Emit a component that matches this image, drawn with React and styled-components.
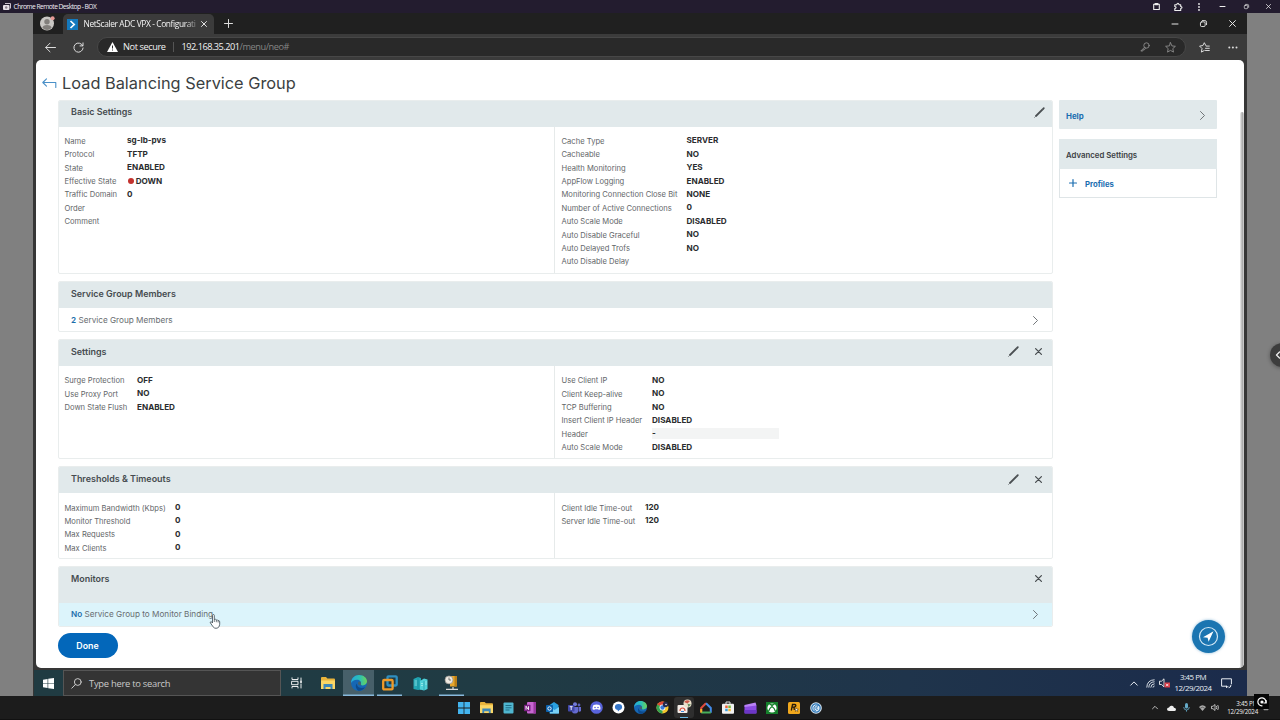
import React from "react";
import styled, { createGlobalStyle, css } from "styled-components";

const Global = createGlobalStyle`
  * { box-sizing: border-box; }
  html, body { margin: 0; padding: 0; overflow: hidden; }
  body { width: 1280px; height: 720px; background: #808080; font-family: Inter, "Liberation Sans", sans-serif; }
  svg { display: block; flex: none; overflow: visible; }
  button { font: inherit; border: 0; padding: 0; background: none; color: inherit; }
`;

const ui = `"Open Sans", "Noto Sans", sans-serif`;

const Screen = styled.div`
  width: 1280px; height: 720px; display: flex; flex-direction: column; position: relative; overflow: hidden;
  white-space: nowrap;
`;

/* ---------- outer window ---------- */
const HostTitle = styled.header`
  height: 13px; flex: none; background: #231c2f; color: #f1eef5; display: flex; align-items: center;
  padding: 0 0 0 3px; font: 6.7px/13px ${ui};
`;
const HostName = styled.span`margin-left: 2.5px; flex: 1; letter-spacing: -0.55px;`;
const HostTools = styled.div`
  display: grid; grid-template-columns: 22px 21px 21px 27px 20px 24px; justify-items: center; align-items: center; color: #eee;
`;
const HostBody = styled.div`flex: 1; display: flex; padding: 0 33px 0 33px; background: #808080;`;
const Remote = styled.div`width: 1214px; flex: none; height: 683px; display: flex; flex-direction: column; background: #363636;`;

/* ---------- browser ---------- */
const TabStrip = styled.div`height: 21px; flex: none; background: #202020; display: flex; align-items: stretch; color: #ddd;`;
const Profile = styled.div`width: 30px; padding: 3px 0 0 7px;`;
const Tab = styled.div`
  width: 151px; margin-top: 1px; height: 20px; background: #3b3b3b; border-radius: 5px 5px 0 0; display: flex; align-items: center;
  padding: 0 6.5px 0 4px; font: 8.4px/20px ${ui}; color: #f4f4f4;
`;
const TabTitle = styled.span`
  width: 117px; margin-left: 5.5px; flex: none; letter-spacing: -0.38px;
  mask-image: linear-gradient(90deg, #000 86%, transparent 100%);
`;
const NewTab = styled.div`margin: 6px 0 0 9.5px;`;
const WindowButtons = styled.div`
  margin-left: auto; display: grid; grid-template-columns: 29px 29px 29px; justify-items: center; align-items: center; color: #e6e6e6;
`;
const Toolbar = styled.div`
  height: 26px; flex: none; background: #3b3b3b; display: flex; align-items: center; padding-left: 12px; color: #ddd;
`;
const NavButton = styled.span`width: 28px; display: flex;`;
const Address = styled.div`
  width: 1089px; height: 20px; margin-left: -4px; border-radius: 10px; background: #292929; border: 1px solid #474747; flex: none;
  display: flex; align-items: center; padding: 0 9px 0 9px; font: 9.2px/18px ${ui}; color: #f2f2f2;
`;
const Secure = styled.span`margin-left: 5px; width: 50px; letter-spacing: -0.4px;`;
const Url = styled.span`border-left: 1px solid #555; line-height: 10px; padding-left: 7.5px; flex: 1; letter-spacing: -0.5px;`;
const UrlPath = styled.span`color: #858585; letter-spacing: -0.44px;`;
const AddressIcons = styled.span`display: flex; gap: 15px; color: #8c8c8c;`;
const BrowserIcons = styled.span`display: flex; align-items: center; gap: 18px; margin-left: 12.5px; color: #e0e0e0;`;

const Viewport = styled.main`
  width: 1208.5px; height: 608px; margin-left: 2.5px; flex: none; background: #fff; border-radius: 5px; position: relative; overflow: hidden;
  padding: 13px 0 0 6px;
`;
const ScrollTrack = styled.div`
  position: absolute; right: 0; top: 52px; bottom: 0; width: 4.5px; border-radius: 3px 3px 0 0;
  background: linear-gradient(90deg, #ececec, #a9a9a9 60%, #d6d6d6);
`;

/* ---------- page ---------- */
const Heading = styled.h1`
  margin: 0; height: 20px; display: flex; align-items: center; gap: 5.5px; font-size: 16.35px; line-height: 20px; font-weight: 400; color: #3b3f42;
`;
const Columns = styled.div`display: flex; gap: 6.5px; padding-left: 16px; margin-top: 6.5px;`;
const Panels = styled.div`width: 995px; display: flex; flex-direction: column; gap: 6.8px;`;
const Panel = styled.section`
  height: ${p => p.$h}px; border: 1px solid #e9eded; border-radius: 2px; overflow: hidden; display: flex; flex-direction: column;
`;
const PanelHead = styled.header`
  height: ${p => p.$h || 26}px; flex: none; background: #e1e9eb; display: flex; justify-content: space-between; padding: 0 6.5px 0 12.5px;
  font-size: 8.95px; line-height: ${p => p.$line || 23.5}px; font-weight: 600; color: #464c50;
`;
const PanelTools = styled.span`height: 24px; display: flex; align-items: center; gap: 11px; color: #4a4f52;`;
const PanelBody = styled.div`flex: 1; display: grid; grid-template-columns: 495px 1fr;`;
const Side = styled.dl`
  margin: 0; padding: 7.4px 0 0 6px; ${p => p.$right && css`border-left: 1px solid #e6eaea; padding-left: 7px;`}
`;
const Row = styled.div`display: grid; grid-template-columns: ${p => p.$w}px auto; height: 13.4px; align-items: center; justify-content: start;`;
const Label = styled.dt`font-size: 7.6px; line-height: 13px; color: #636669; padding-top: 1px;`;
const Value = styled.dd`
  margin: 0; font-size: 8.15px; line-height: 11px; font-weight: 700; color: #2a2c2e; display: flex; align-items: center;
  ${p => p.$field && css`width: 127px; background: #f3f4f4; margin-left: -0.5px; padding-left: 0.5px;`}
`;
const Dot = styled.i`width: 6.6px; height: 6.6px; flex: none; border-radius: 50%; background: #c3322e; margin: 0 1.4px 0 0.7px;`;
const LinkRow = styled.div`
  flex: 1; display: flex; align-items: center; justify-content: space-between; padding: 2px 13.5px 0 12.5px; font-size: 8.2px; color: #686d70;
  ${p => p.$hover && css`background: #dcf4fb; margin: 0 -1px -1px; padding: 0 14.5px 1px 13.5px;`}
`;
const Gray = styled.span`color: #63686b; display: flex;`;
const Count = styled.b`color: #1b6eab; font-weight: 600;`;
const Done = styled.button`
  width: 60px; height: 25px; border-radius: 13px; background: #0367ba; color: #fff; font-size: 8.8px; font-weight: 600; margin: 6.5px 0 0 16px;
`;
const Aside = styled.aside`width: 158px;`;
const Help = styled.div`
  height: 29px; background: #e1e9eb; display: flex; align-items: center; justify-content: space-between; padding: 3px 12px 0 7px;
  font-size: 7.9px; font-weight: 700; color: #1a6db0; margin-bottom: 10px; border-radius: 1px;
`;
const AsideHead = styled.div`height: 30px; background: #e1e9eb; padding: 1px 7px; font-size: 7.8px; line-height: 31px; font-weight: 600; color: #3b4043;`;
const AsideItem = styled.div`
  height: 29px; border: 1px solid #dfe5e7; border-top: 0; display: flex; align-items: center; gap: 8px; padding: 3px 0 0 9px;
  font-size: 7.7px; font-weight: 700; color: #1a6db0;
`;
const PlusMark = styled.span`display: flex; margin-top: -2px;`;
const Guide = styled.div`
  position: absolute; left: 1156px; top: 560px; width: 33px; height: 33px; border-radius: 50%; background: #1b75b1;
  box-shadow: 0 0 3px #1b75b188; display: grid; place-items: center;
`;
const Pointer = styled.div`position: absolute; left: 209px; top: 614px;`;
const SideHandle = styled.div`
  position: absolute; left: 1270px; top: 343px; width: 24px; height: 24px; border-radius: 50%; background: #3d3d3d; padding: 8px 0 0 5px;
  box-shadow: 0 1px 4px #0005; color: #eee;
`;

/* ---------- taskbars ---------- */
const TaskBar = styled.div`
  height: 26px; margin-top: 2px; margin-left: 1px; display: flex; color: #fff;
  background: linear-gradient(90deg, #203b42 0%, #203b44 40%, #1f344b 72%, #1b2b4b 100%);
`;
const Start = styled.div`width: 29px; display: grid; place-items: center;`;
const Search = styled.div`
  width: 218px; background: #343434; border: 1px solid #555; display: flex; align-items: center; gap: 7px; padding: 1px 0 0 7px;
  font: 9.4px/23px ${ui}; color: #c9c9c9; letter-spacing: -0.27px;
`;
const TaskCell = styled.div`
  width: 31px; display: grid; place-items: center; ${p => p.$active && css`background: #47606a;`}
  ${p => p.$open && css`box-shadow: inset 0 -1.4px #88b9dc;`}
  ${p => p.$open && !p.$active && css`margin: 0 3px; width: 25px;`}
`;
const Tray = styled.div`margin-left: auto; display: flex; align-items: center; gap: 8px; padding-right: 15px; color: #e8edf3;`;
const Speaker = styled.span`display: flex; margin-left: -4px; margin-right: -4px;`;
const Clock = styled.div`
  font: 7.9px/11.2px ${ui}; letter-spacing: -0.5px; width: 38px; display: flex; flex-direction: column; align-items: center; margin-right: 1px;
`;
const HostTaskBar = styled.footer`
  height: 24px; flex: none; background: #1c1c1c; border-bottom: 1px solid #111; display: flex; padding-left: 453px; color: #eee;
`;
const HostIcons = styled.div`display: grid; grid-template-columns: repeat(17, 22px);`;
const HostCell = styled.div`
  display: grid; place-items: center;
  ${p => p.$active && css`background: linear-gradient(#6ab7e2, #6ab7e2) center bottom / 8px 1.5px no-repeat #2e2e2e; border-radius: 3px; margin: 1px;`}
`;
const HostTray = styled.div`margin-left: auto; display: flex; align-items: center; padding-right: 11px;`;
const TrayItem = styled.span`display: flex; margin-left: ${p => p.$gap}px;`;
const HostClock = styled.div`
  margin-left: 7px; width: 32px; font: 6.2px/8px ${ui}; display: flex; flex-direction: column; align-items: flex-end; letter-spacing: -0.2px;
`;
const CastBadge = styled.div`
  position: absolute; left: 1254px; top: 694px; width: 15px; height: 15px; background: #050505; display: grid; place-items: center; color: #fff;
`;

/* ---------- line icons ---------- */
const Svg = ({ w = 12, h = w, box = `0 0 ${w} ${h}`, sw = 1, children }) => (
  <svg width={w} height={h} viewBox={box} fill="none" stroke="currentColor" strokeWidth={sw} strokeLinecap="round" strokeLinejoin="round">{children}</svg>
);
const Minus = ({ s = 6 }) => <Svg w={s}><path d={`M0 ${s / 2}H${s}`} /></Svg>;
const Cross = ({ s = 6, sw = 1 }) => <Svg w={s} box="0 0 6 6" sw={sw}><path d="M.5 .5L5.5 5.5M5.5 .5L.5 5.5" /></Svg>;
const Restore = ({ s = 6 }) => <Svg w={s} box="0 0 6 6" sw={.8}><rect x=".4" y="1.6" width="4" height="4" rx="1" /><path d="M2 .5h2.200Q5.600.5 5.600 2v2" /></Svg>;
const Pencil = () => <Svg w={11}><path d="M1.600 9.400 8.600 2.400" strokeWidth="2" strokeLinecap="butt" /><path d="m9 2 .8-.8" strokeWidth="1.800" /><path d="m.7 10.300.8-.8" strokeWidth=".8" /></Svg>;
const Chevron = () => <Gray><Svg w={5} h={9} sw={.9}><path d="m.5.500 4 4-4 4" /></Svg></Gray>;
const Up = ({ w = 8 }) => <Svg w={w} h={5} box="0 0 8 5"><path d="M.7 4.200 4 .900l3.300 3.300" /></Svg>;

const Avatar = () => (
  <svg width="16" height="16"><circle cx="7" cy="7.500" r="7" fill="#c9c7c4" /><circle cx="7" cy="5.800" r="2.700" fill="#827f7c" /><path d="M2.400 11.800Q2.700 8.900 7 8.900t4.600 2.900Q9.800 14 7 14T2.400 11.800" fill="#827f7c" /><circle cx="12.600" cy="2.200" r="2" fill="#e79a96" /></svg>
);
const Favicon = () => <svg width="11" height="11"><rect width="11" height="11" fill="#1479bd" /><path d="m3.500 2 3.700 3.500L3.500 9" fill="none" stroke="#fff" strokeWidth="1.700" /></svg>;
const WindowsLogo = ({ s = 11, c = "#fff", skew }) => (
  <svg width={s} height={s} viewBox="0 0 12 12" fill={c}>{skew
    ? <path d="M0 1.800 5 1v4.600H0zM5.700.9 12 0v5.600H5.700zM0 6.300h5v4.600l-5-.7zM5.700 6.300H12V12l-6.300-.9z" />
    : <path d="M0 0h5.600v5.600H0zM6.400 0H12v5.600H6.400zM0 6.400h5.600V12H0zM6.400 6.400H12V12H6.400z" />}</svg>
);
const Folder = ({ s = 14 }) => (
  <svg width={s} height={s} viewBox="0 0 14 14"><path d="M0 2q0-1 1-1h4l1.400 1.500H13q1 0 1 1V12H0z" fill="#e9b43c" /><path d="M0 4.500h14V13H0z" fill="#fbd766" /><path d="M2.500 8h9v5h-2v-2h-5v2h-2z" fill="#3d88b9" /></svg>
);
const Edge = ({ s = 16 }) => (
  <svg width={s} height={s} viewBox="0 0 16 16">
    <defs><linearGradient id="eg" x1="0" x2="1"><stop stopColor="#25a8db" /><stop offset=".55" stopColor="#2cc1b3" /><stop offset="1" stopColor="#6dd457" /></linearGradient></defs>
    <circle cx="8" cy="8" r="8" fill="#1667b4" /><path d="M0 8C.2 3 3.800 0 8 0c4.600 0 8 3 8 6.300 0 2.500-2 4.100-4.200 4.100-2 0-2.700-.9-2-1.900C10.500 6.500 8.500 4.600 6 4.700 3 4.800 1 6 0 8" fill="url(#eg)" />
    <path d="M6.100 8.500c-.5 3.200 2.500 5.600 8 3.800-1.500 2.300-4 3.700-6.600 3.500C4.500 13.500 4 10 6.100 8.500" fill="#0d4a8d" /><path d="M8 6.600Q9.900 6.600 9.900 8q-.7 1.600.5 2.200Q7.700 10.500 7 9 6.700 7.500 8 6.600" fill="#47606a" />
  </svg>
);
const VmWare = () => <svg width="16" height="16" fill="none" strokeWidth="2.300"><rect x="5.500" y="1.300" width="9.200" height="9.200" rx="1" stroke="#2f8fc0" /><rect x="1.200" y="5" width="9.400" height="9.400" rx="1" stroke="#f09a28" /></svg>;
const Servers = () => (
  <svg width="15" height="15"><path d="M.5 3 5 1l3 1v11.500l-3 .5-4.500-1z" fill="#23a8b5" /><path d="m7 5 4-2.500 3.500 1V13L11 14.500l-4-1z" fill="#50d0d8" /><path d="M5 1v12.500M11 5v9.500" stroke="#157e8d" strokeWidth=".5" /><path d="M1.500 5H4M1.500 7H4M1.500 9H4M8 7.500h2M8 9.500h2M12 6h2M12 8h2" stroke="#aff0ef" strokeWidth=".7" /></svg>
);
const Clocked = () => (
  <svg width="16" height="16"><path d="M6 1h6.500v10.500H6z" fill="#e8a72d" /><path d="M10.500 1H13v10.500h-2.500z" fill="#b97e18" /><path d="M9 12v2M2 14.300h12" stroke="#d8d8d8" strokeWidth="1.300" /><circle cx="5" cy="4.900" r="4" fill="#eeeae2" stroke="#8f8c86" strokeWidth=".7" /><path d="M5 2.500v2.500h2" fill="none" stroke="#555" strokeWidth=".8" /></svg>
);
const TaskView = () => <Svg w={12} sw={.9}><path d="M1 .8v1.700h6V.8M1 11V9.500h6V11M1 4.300h6v3.400H1zM10 1v2M10 7v4" /><path d="M10 4v1.500" strokeWidth="1.600" /></Svg>;
const Cursor = () => (
  <svg width="12" height="15" viewBox="0 0 11 15"><path d="M3 8V1.500Q3 .5 3.900.5t.9 1v4q1.500-.6 2 .4 1.500-.3 1.800.7 1.600-.1 1.600 1.200v2.500q0 3-2.600 3.900H5Q3.200 12.500.8 8.800q-.2-1.100.8-1.100Q2.400 7.900 3 9z" fill="#fff" stroke="#3b4850" strokeWidth=".8" /><path d="M4.800 5.500V8M6.800 6v2.200M8.600 6.700v1.800" stroke="#3b4850" strokeWidth=".7" /></svg>
);

const hostIcons = [
  <WindowsLogo s={12} c="#43b4ee" />,
  <Folder s={13} />,
  <svg width="11" height="12"><rect x=".5" y=".5" width="10" height="11" rx="1" fill="#4fb6cf" /><path d="M2.500 3.500h6M2.500 5.800h6M2.500 8h4" stroke="#19657f" strokeWidth=".9" /></svg>,
  <svg width="12" height="12"><rect x="3" y="0" width="9" height="11.500" rx="1" fill="#c767d0" /><path d="M9.500 0h2.500v11.500H9.500z" fill="#98379f" /><rect y="2.700" width="6.500" height="6.500" rx=".7" fill="#7a2182" /><path d="M2 7.700V4.200l2.500 3.500V4.200" stroke="#fff" strokeWidth=".9" fill="none" /></svg>,
  <svg width="13" height="12"><path d="M3.500 3 8 0l4.500 3v8.500h-9z" fill="#2aa0df" /><path d="m4 5 4.500 3L13 5v6.500H4z" fill="#79d0f5" /><rect y="3" width="7" height="7" rx=".8" fill="#0b62ad" /><circle cx="3.500" cy="6.500" r="1.700" fill="none" stroke="#fff" strokeWidth=".9" /></svg>,
  <svg width="13" height="12"><circle cx="7" cy="2.200" r="2" fill="#7279d8" /><circle cx="11" cy="3" r="1.400" fill="#5960bd" /><path d="M4 5h6v5q-1 1.500-3 1.500T4 10zM10.500 5H13v4q-1 1-2.500.5z" fill="#656bd0" /><rect y="3" width="6.500" height="6.500" rx=".7" fill="#4248a8" /><path d="M1.700 4.700h3M3.200 4.700V8" stroke="#fff" strokeWidth=".9" /></svg>,
  <svg width="13" height="13"><circle cx="6.500" cy="6.500" r="6.300" fill="#5964dc" /><path d="M3.500 4Q6.500 2.800 9.500 4q1.200 2 1 4.300l-1.700.8-.6-.9H4.800l-.6.9-1.700-.8Q2.300 6 3.500 4" fill="#fff" /><circle cx="5" cy="6.500" r=".8" fill="#5964dc" /><circle cx="8" cy="6.500" r=".8" fill="#5964dc" /></svg>,
  <svg width="13" height="13"><circle cx="6.500" cy="6.500" r="6" fill="#fff" /><ellipse cx="6.500" cy="6" rx="3.600" ry="2.900" fill="#3475c8" /><path d="m5.500 8 .5 2.500L8.500 8" fill="#3475c8" /></svg>,
  <Edge s={13} />,
  <svg width="13" height="13" viewBox="-6.500 -6.500 13 13"><circle r="6" fill="#f4c62e" /><path d="M0 0-5.200-3A6 6 0 0 1 5.200-3z" fill="#dd4739" /><path d="m0 0-5.200-3A6 6 0 0 0 0 6z" fill="#35a352" /><circle r="2.900" fill="#fff" /><circle r="2.200" fill="#397bdc" /><circle cx="3" cy="-3" r="2.700" fill="#23294e" /><circle cx="3.500" cy="-3" r=".8" fill="#e7edf5" /></svg>,
  <svg width="16" height="17"><rect x="1.500" y="6" width="10" height="8" rx="1" fill="#f3ece6" /><path d="M4 12q0-3 2.500-3T9 12" fill="none" stroke="#d94839" strokeWidth="1.100" /><path d="M5 12.500h3" stroke="#4087d6" /><circle cx="11.500" cy="4.500" r="4" fill="#eadfca" /><path d="M8 3Q10 0 14 2L11.500 4.500" fill="#cb5b4c" /><path d="M11.500 4.800 15 5.500 12.500 8" fill="#618f61" /></svg>,
  <svg width="12" height="12" fill="none" strokeWidth="2"><path d="M6 1.200 1.200 6v4.800" stroke="#de4b3e" /><path d="M6 1.200 10.800 6v4.800" stroke="#438be9" /><path d="M1.200 10.500h9.600" stroke="#47af5a" /><path d="M1.200 7v3.500" stroke="#efb52e" /></svg>,
  <svg width="12" height="13"><path d="M4 3V1h4v2" fill="none" stroke="#ddd" /><rect y="2.700" width="12" height="10" rx="1" fill="#f1f1f1" /><path d="M3.200 4.500h2.500V7H3.200z" fill="#ed6236" /><path d="M6.300 4.500h2.500V7H6.300z" fill="#75b83e" /><path d="M3.200 7.700h2.500v2.500H3.200z" fill="#3a9ddb" /><path d="M6.300 7.700h2.500v2.500H6.300z" fill="#f2b92f" /></svg>,
  <svg width="13" height="12"><rect x=".5" y="3" width="12" height="8.500" rx="1" fill="#8b4be1" /><path d="m.5 3 11-2.500 1 3-12 1.500z" fill="#b982f5" /><path d="M.5 8h12v3.500H.5z" fill="#6b36c7" /></svg>,
  <svg width="12" height="12"><rect width="12" height="12" fill="#15802b" /><circle cx="6" cy="6" r="4.600" fill="#fff" /><path d="M2.500 9.500Q3.500 6 6 4.500 8.500 6 9.500 9.500M3.500 2.300Q5 2.300 6 3.500 7 2.300 8.500 2.300" fill="none" stroke="#15802b" strokeWidth="1.300" /></svg>,
  <svg width="12" height="12"><rect width="12" height="12" rx="1.500" fill="#f1a81d" /><path d="M3.300 8.500 4.500 2.500H6.700Q8.300 2.700 7.700 4.200 7 5.400 5.500 5.200H4.200M6 5.300 6.300 8" fill="none" stroke="#25190b" strokeWidth="1.300" /><path d="m8.500 5.800.5 1.400h1.500L9.300 8l.5 1.500-1.300-.9-1.200.9.400-1.500-1-.8H8z" fill="#fff" stroke="#25190b" strokeWidth=".4" /></svg>,
  <svg width="12" height="12"><circle cx="6" cy="6" r="5.800" fill="#dceaf5" /><circle cx="6" cy="6" r="4.200" fill="none" stroke="#3078b7" strokeWidth="1.200" /><path d="M9.500 3.500Q6 2 4 5q-1 3.500 2 4M8 4.800Q6 4.500 5.800 6q.2 1.700 2 1.300" fill="none" stroke="#3078b7" strokeWidth="1" /></svg>,
];

/* ---------- data ---------- */
const basicLeft = [["Name", "sg-lb-pvs"], ["Protocol", "TFTP"], ["State", "ENABLED"], ["Effective State", "DOWN", "dot"], ["Traffic Domain", "0"], ["Order"], ["Comment"]];
const basicRight = [["Cache Type", "SERVER"], ["Cacheable", "NO"], ["Health Monitoring", "YES"], ["AppFlow Logging", "ENABLED"], ["Monitoring Connection Close Bit", "NONE"], ["Number of Active Connections", "0"], ["Auto Scale Mode", "DISABLED"], ["Auto Disable Graceful", "NO"], ["Auto Delayed Trofs", "NO"], ["Auto Disable Delay"]];
const setLeft = [["Surge Protection", "OFF"], ["Use Proxy Port", "NO"], ["Down State Flush", "ENABLED"]];
const setRight = [["Use Client IP", "NO"], ["Client Keep-alive", "NO"], ["TCP Buffering", "NO"], ["Insert Client IP Header", "DISABLED"], ["Header", "-", "field"], ["Auto Scale Mode", "DISABLED"]];
const thrLeft = [["Maximum Bandwidth (Kbps)", "0"], ["Monitor Threshold", "0"], ["Max Requests", "0"], ["Max Clients", "0"]];
const thrRight = [["Client Idle Time-out", "120"], ["Server Idle Time-out", "120"]];

const Fields = ({ rows, w, right }) => (
  <Side $right={right}>
    {rows.map(([label, value, kind]) => (
      <Row key={label} $w={w}>
        <Label>{label}</Label>
        {value && <Value $field={kind === "field"}>{kind === "dot" && <Dot />}{value}</Value>}
      </Row>
    ))}
  </Side>
);
const XMark = styled.span`margin-right: 3.5px; padding-left: 5px;`;
const Head = ({ title, edit, close, h, line }) => (
  <PanelHead $h={h} $line={line}>{title}<PanelTools>{edit && <Pencil />}{close && <XMark><Cross s={7} sw={1.1} /></XMark>}</PanelTools></PanelHead>
);

export default function App() {
  return (
    <Screen>
      <Global />
      <HostTitle>
        <svg width="8" height="8"><rect y="2" width="6.500" height="5" rx="1" fill="#e7e0e8" /><path d="M2 .5h5.500v5" fill="none" stroke="#c9c0cc" /><circle cx="3.200" cy="4.500" r="1.200" fill="#887d8b" /></svg>
        <HostName>Chrome Remote Desktop - BOX</HostName>
        <HostTools>
          <Svg w={7} sw={1.100}><path d="M.7 1.200h5.600v5.300H.7z" /><path d="M2.500 1.200h2" strokeWidth="2.200" /></Svg>
          <Svg w={8} sw={1.100}><path d="M.8 1.800h2Q3 .3 3.900.3T5 1.800h1.700v1.700q1.300.1 1.300 1t-1.300 1v2H.8V5.600q1.300-.2 1.300-1.100T.8 3.500z" /></Svg>
          <svg width="2" height="8" fill="#eee"><circle cx="1" cy="1" r=".9" /><circle cx="1" cy="4" r=".9" /><circle cx="1" cy="7" r=".9" /></svg>
          <Minus s={5} /><Restore s={5} /><Cross s={5} sw={.9} />
        </HostTools>
      </HostTitle>

      <HostBody>
        <Remote>
          <TabStrip>
            <Profile><Avatar /></Profile>
            <Tab><Favicon /><TabTitle>NetScaler ADC VPX - Configurati</TabTitle><Cross s={6} sw={.9} /></Tab>
            <NewTab><Svg w={9}><path d="M4.500.5v8M.5 4.500h8" /></Svg></NewTab>
            <WindowButtons><Minus s={6} /><Restore s={7} /><Cross s={7} sw={.85} /></WindowButtons>
          </TabStrip>
          <Toolbar>
            <NavButton><Svg w={11}><path d="M10.500 5.500H.8M5 1.200.7 5.500 5 9.800" /></Svg></NavButton>
            <NavButton><Svg w={11}><path d="M9.700 3.700A4.600 4.600 0 1 0 10.100 6M10 .9v3H7" /></Svg></NavButton>
            <Address>
              <svg width="11" height="10"><path d="M5.500 0 11 10H0z" fill="#fff" /><path d="M5.500 3.500v3M5.500 7.500v1" stroke="#292929" /></svg>
              <Secure>Not secure</Secure>
              <Url>192.168.35.201<UrlPath>/menu/neo#</UrlPath></Url>
              <AddressIcons>
                <Svg w={10} sw={.9}><circle cx="6.500" cy="3.500" r="2.700" /><path d="M4.500 5.300.8 9h2l.4-1.300h1.300L5.500 6" /></Svg>
                <Svg w={11} sw={.9}><path d="m5.500.7 1.400 3.200 3.500.4-2.600 2.300.7 3.500-3-1.700-3 1.700.7-3.500L.6 4.300l3.500-.4z" /></Svg>
              </AddressIcons>
            </Address>
            <BrowserIcons>
              <Svg w={11} sw={.95}><path d="M6.800 3.500 5.300.7 3.900 3.500l-3.300.6L3 6.500l-.6 3.600 2.900-1.600M7.300 4.100h3M6.500 6.300h3.800M6.500 8.500h3.800" /></Svg>
              <svg width="10" height="3" fill="#ddd"><circle cx="1.300" cy="1.500" r="1" /><circle cx="4.900" cy="1.500" r="1" /><circle cx="8.500" cy="1.500" r="1" /></svg>
            </BrowserIcons>
          </Toolbar>

          <Viewport>
            <Heading>
              <Svg w={15} h={13}><path d="M4.500 1.800.8 5.500l3.700 3.700M.8 5.500h13v5" stroke="#4a90c8" strokeWidth="1.100" /></Svg>
              Load Balancing Service Group
            </Heading>
            <Columns>
              <Panels>
                <Panel $h={174.500}><Head title="Basic Settings" edit line={22.500} />
                  <PanelBody><Fields rows={basicLeft} w={62.5} /><Fields rows={basicRight} w={125} right /></PanelBody></Panel>
                <Panel $h={51.300}><Head title="Service Group Members" />
                  <LinkRow><span><Count>2</Count> Service Group Members</span><Chevron /></LinkRow></Panel>
                <Panel $h={120.500}><Head title="Settings" edit close />
                  <PanelBody><Fields rows={setLeft} w={72.5} /><Fields rows={setRight} w={90.5} right /></PanelBody></Panel>
                <Panel $h={93}><Head title="Thresholds &amp; Timeouts" edit close />
                  <PanelBody><Fields rows={thrLeft} w={110.500} /><Fields rows={thrRight} w={83.500} right /></PanelBody></Panel>
                <Panel $h={61}><Head title="Monitors" close h={36} />
                  <LinkRow $hover><span><Count>No</Count> Service Group to Monitor Binding</span><Chevron /></LinkRow></Panel>
              </Panels>
              <Aside>
                <Help>Help<Chevron /></Help>
                <AsideHead>Advanced Settings</AsideHead>
                <AsideItem><PlusMark><Svg w={8} sw={1.200}><path d="M4 .5v7M.5 4h7" /></Svg></PlusMark>Profiles</AsideItem>
              </Aside>
            </Columns>
            <Done>Done</Done>
            <ScrollTrack />
            <Guide>
              <svg width="21" height="21"><circle cx="10.500" cy="10.500" r="9" fill="none" stroke="#d3e8f5" strokeWidth="1.200" /><path d="M15.500 5.200 10.600 15.800 9.600 11.700 5 11.300z" fill="#fff" /></svg>
            </Guide>
          </Viewport>

          <TaskBar>
            <Start><WindowsLogo s={11} skew /></Start>
            <Search><Svg w={11} sw={1}><circle cx="6.800" cy="4" r="3.400" /><path d="M4.400 6.500.8 10.200" /></Svg>Type here to search</Search>
            <TaskCell><TaskView /></TaskCell>
            <TaskCell><Folder s={14} /></TaskCell>
            <TaskCell $open $active><Edge /></TaskCell>
            <TaskCell $open><VmWare /></TaskCell>
            <TaskCell><Servers /></TaskCell>
            <TaskCell $open><Clocked /></TaskCell>
            <Tray>
              <Up />
              <Svg w={9} sw={.9}><path d="M.8 8.200Q1 1 8.200.8M2.800 8.200Q3 3 8.200 2.800M4.800 8.200Q5 5 8.200 4.800M7 8.200Q7 7 8.200 7" /></Svg>
              <Speaker><svg width="11" height="10"><path d="M.5 3.200h2L5 .8v8L2.500 6.500h-2z" fill="none" stroke="#eee" strokeWidth=".9" /><rect x="5.500" y="4.500" width="5.500" height="5" fill="#d73b46" /><path d="m7 5.800 2.400 2.400M9.400 5.800 7 8.200" stroke="#fff" strokeWidth=".8" /></svg></Speaker>
              <Clock><span>3:45 PM</span><span>12/29/2024</span></Clock>
              <Svg w={11}><path d="M5.500 8.200H.6V.8h9.800v5M5.500 8.200v1.600l1.600-1.600M8 9.700q2 0 2-2.500" /></Svg>
            </Tray>
          </TaskBar>
        </Remote>
      </HostBody>

      <HostTaskBar>
        <HostIcons>{hostIcons.map((icon, i) => <HostCell key={i} $active={i === 10}>{icon}</HostCell>)}</HostIcons>
        <HostTray>
          <Up w={6} />
          <TrayItem $gap={9}><svg width="9" height="6"><path d="M2 6Q0 6 0 4.300T2 2.500Q3 .2 5 .8 6.500 1 7 2.700 9 2.700 9 4.500 8.700 6 7.500 6z" fill="#eee" /></svg></TrayItem>
          <TrayItem $gap={7.5}><svg width="7" height="9"><rect x="2" y="0" width="3" height="5.500" rx="1.500" fill="#65abc9" /><path d="M.7 4Q.8 7 3.500 7t2.800-3M3.500 7v1.700" fill="none" stroke="#65abc9" strokeWidth=".8" /></svg></TrayItem>
          <TrayItem $gap={9}><svg width="7" height="6"><path d="M0 2Q3.500-1.500 7 2L3.500 6z" fill="#aaa" /><path d="M1.300 3.200Q3.500 1.200 5.700 3.200" stroke="#333" strokeWidth=".6" fill="none" /></svg></TrayItem>
          <TrayItem $gap={5}><svg width="8" height="7" fill="none" stroke="#ddd" strokeWidth=".8"><path d="M.5 2.300H2L4 .5v6L2 4.700H.5zM5.300 2q1 1.500 0 3M6.700 1q1.600 2.500 0 5" /></svg></TrayItem>
          <HostClock><span>3:45 PM</span><span>12/29/2024</span></HostClock>
          <TrayItem $gap={5}><svg width="6" height="6"><path d="M0 3.500h6L5 5.200H1z" fill="#999" /></svg></TrayItem>
        </HostTray>
      </HostTaskBar>

      <Pointer><Cursor /></Pointer>
      <SideHandle><Svg w={7} h={8} sw={1.300}><path d="M4.500 1 1.500 4l3 3" /></Svg></SideHandle>
      <CastBadge><Svg w={10} sw={1.200}><path d="M8.800 5.500A4 4 0 1 0 5 8.800M9.200 3.500V6H7" /><circle cx="5" cy="5" r="1" fill="#fff" /></Svg></CastBadge>
    </Screen>
  );
}
